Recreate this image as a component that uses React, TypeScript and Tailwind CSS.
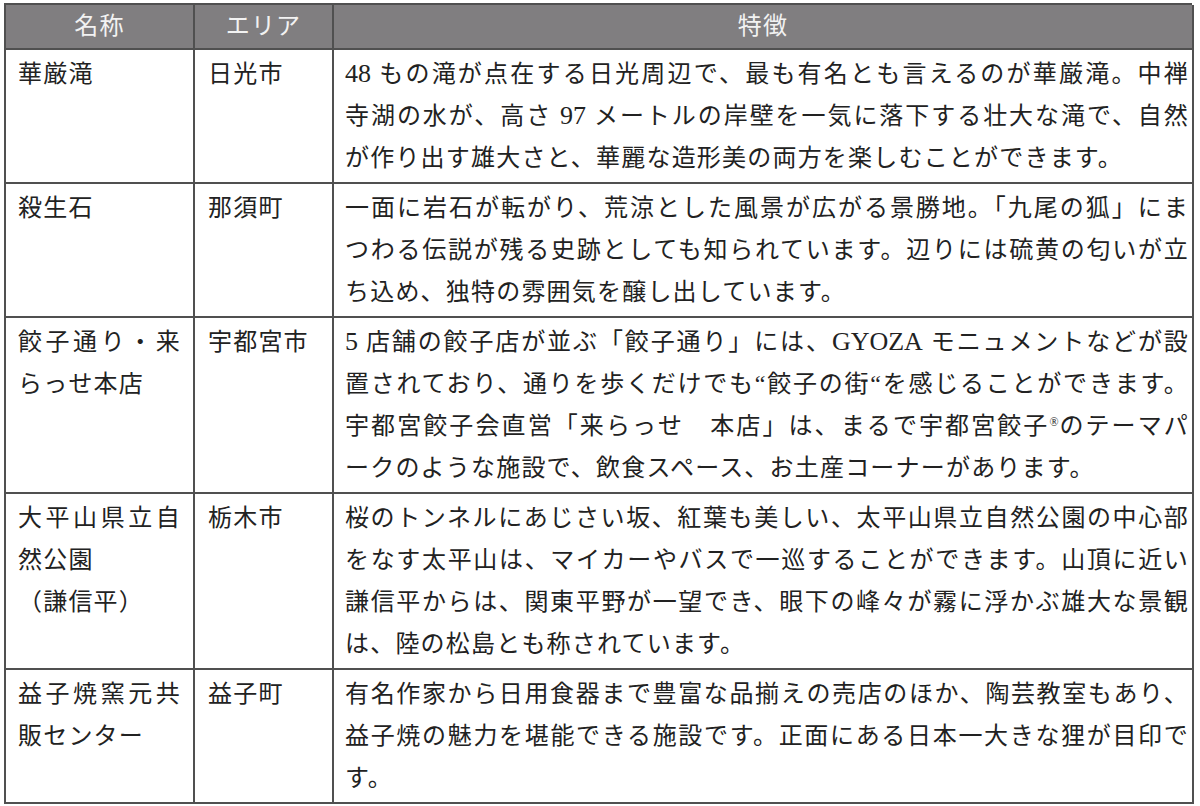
import type { ReactNode } from "react"

type Row = {
  name: string[]
  area: string
  desc: ReactNode[]
}

const Latin = ({ children }: { children: ReactNode }) => (
  <span className="text-[26px] tracking-normal">{children}</span>
)

const rows: Row[] = [
  {
    name: ["華厳滝"],
    area: "日光市",
    desc: [
      <>
        <Latin>48</Latin> もの滝が点在する日光周辺で、最も有名とも言えるのが華厳滝。中禅
      </>,
      <>
        寺湖の水が、高さ <Latin>97</Latin> メートルの岸壁を一気に落下する壮大な滝で、自然
      </>,
      "が作り出す雄大さと、華麗な造形美の両方を楽しむことができます。",
    ],
  },
  {
    name: ["殺生石"],
    area: "那須町",
    desc: [
      "一面に岩石が転がり、荒涼とした風景が広がる景勝地。「九尾の狐」にま",
      "つわる伝説が残る史跡としても知られています。辺りには硫黄の匂いが立",
      "ち込め、独特の雰囲気を醸し出しています。",
    ],
  },
  {
    name: ["餃子通り・来", "らっせ本店"],
    area: "宇都宮市",
    desc: [
      <>
        <Latin>5</Latin> 店舗の餃子店が並ぶ「餃子通り」には、<Latin>GYOZA</Latin> モニュメントなどが設
      </>,
      "置されており、通りを歩くだけでも“餃子の街“を感じることができます。",
      <>
        宇都宮餃子会直営「来らっせ　本店」は、まるで宇都宮餃子
        <span className="relative -top-[8px] text-[12px] leading-none tracking-normal">®</span>
        のテーマパ
      </>,
      "ークのような施設で、飲食スペース、お土産コーナーがあります。",
    ],
  },
  {
    name: ["大平山県立自", "然公園", "（謙信平）"],
    area: "栃木市",
    desc: [
      "桜のトンネルにあじさい坂、紅葉も美しい、太平山県立自然公園の中心部",
      "をなす太平山は、マイカーやバスで一巡することができます。山頂に近い",
      "謙信平からは、関東平野が一望でき、眼下の峰々が霧に浮かぶ雄大な景観",
      "は、陸の松島とも称されています。",
    ],
  },
  {
    name: ["益子焼窯元共", "販センター"],
    area: "益子町",
    desc: [
      "有名作家から日用食器まで豊富な品揃えの売店のほか、陶芸教室もあり、",
      "益子焼の魅力を堪能できる施設です。正面にある日本一大きな狸が目印で",
      "す。",
    ],
  },
]

// full lines are spread edge to edge, short or last lines are left as they are
function Lines({ lines, minFull = 0 }: { lines: ReactNode[]; minFull?: number }) {
  return (
    <>
      {lines.map((line, i) => {
        const full =
          i < lines.length - 1 && (typeof line !== "string" || line.length >= minFull)
        return (
          <span
            key={i}
            className={
              full
                ? "block whitespace-nowrap text-justify [text-align-last:justify]"
                : "block whitespace-nowrap"
            }
          >
            {line}
          </span>
        )
      })}
    </>
  )
}

export default function App() {
  return (
    <div className="min-h-[806px] w-[1200px] bg-white pl-[4px] pt-[3px] font-['Liberation_Serif','Noto_Sans_CJK_JP',serif] text-[24px] leading-[42px] tracking-[1.2px] text-[#222]">
      <div className="grid w-[1188px] grid-cols-[189px_139px_860px] border-l-2 border-t-2 border-[#505050]">
        {/* header */}
        <div className="flex h-[45px] items-center justify-center border-b-2 border-r-2 border-[#505050] bg-[#807e80] pb-[2px] text-[#f2f2f2]">
          名称
        </div>
        <div className="flex h-[45px] items-center justify-center border-b-2 border-r-2 border-[#505050] bg-[#807e80] pb-[2px] text-[#f2f2f2]">
          エリア
        </div>
        <div className="flex h-[45px] items-center justify-center border-b-2 border-r-2 border-[#505050] bg-[#807e80] pb-[2px] text-[#f2f2f2]">
          特徴
        </div>

        {rows.map((row) => (
          <div key={row.area} className="contents">
            <div className="border-b-2 border-r-2 border-[#505050] pb-[3px] pl-[12px] pr-[12px] pt-[3px]">
              <Lines lines={row.name} minFull={6} />
            </div>
            <div className="border-b-2 border-r-2 border-[#505050] pb-[3px] pl-[13px] pt-[3px]">
              {row.area}
            </div>
            <div className="border-b-2 border-r-2 border-[#505050] pb-[3px] pl-[11px] pr-[3px] pt-[3px]">
              <Lines lines={row.desc} />
            </div>
          </div>
        ))}
      </div>
    </div>
  )
}
